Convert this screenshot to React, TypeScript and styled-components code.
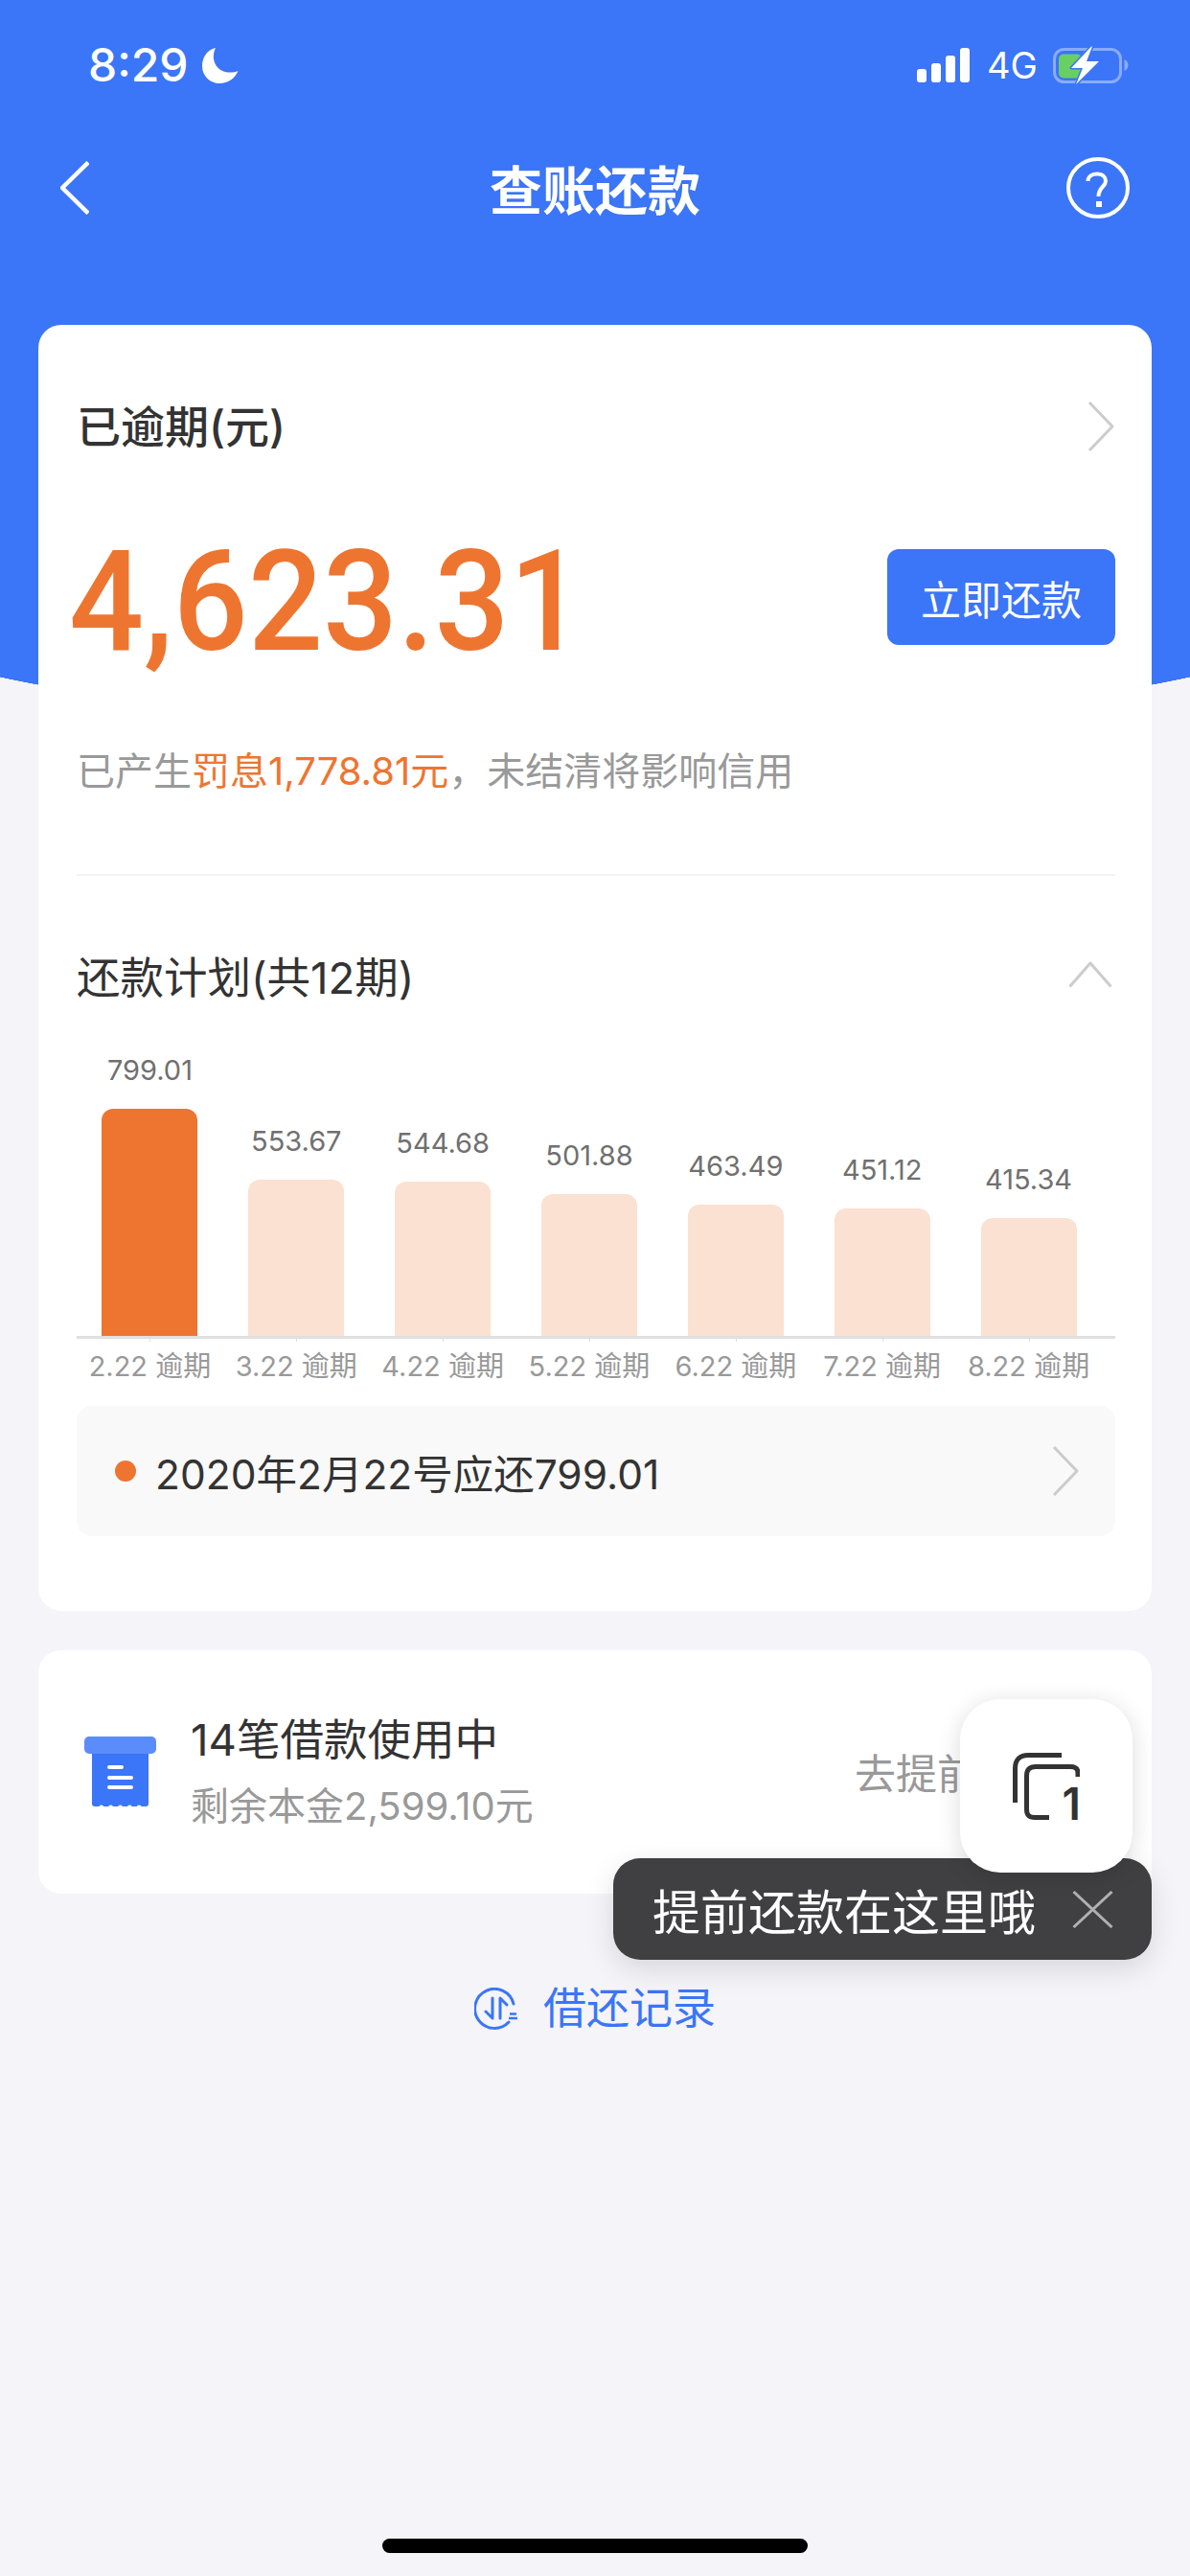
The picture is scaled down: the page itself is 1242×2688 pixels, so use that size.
import React from "react";
import styled, { createGlobalStyle } from "styled-components";

const BLUE = "#3b75f8";
const ORANGE = "#ee7530";

const bars = [
  { value: "799.01", label: "2.22", height: 237, active: true },
  { value: "553.67", label: "3.22", height: 163 },
  { value: "544.68", label: "4.22", height: 161 },
  { value: "501.88", label: "5.22", height: 148 },
  { value: "463.49", label: "6.22", height: 137 },
  { value: "451.12", label: "7.22", height: 133 },
  { value: "415.34", label: "8.22", height: 123 },
];

const GlobalStyle = createGlobalStyle`
  html, body {
    margin: 0;
    padding: 0;
    background: #f4f4f9;
  }
  * {
    box-sizing: border-box;
  }
  body {
    font-family: "Inter", "Noto Sans CJK SC", sans-serif;
    color: #333;
  }
`;

const Page = styled.div`
  position: relative;
  width: 1242px;
  height: 2688px;
  overflow: hidden;
  background: #f4f4f9;
`;

const Hero = styled.header`
  height: 760px;
  background:
    radial-gradient(ellipse 821px 154px at 621px 606px, ${BLUE} 99.8%, transparent 100%),
    linear-gradient(${BLUE}, ${BLUE}) 0 0 / 100% 606px no-repeat;
  color: #fff;
`;

const StatusBar = styled.div`
  height: 136px;
  display: flex;
  align-items: flex-start;
  justify-content: space-between;
  padding: 40px 64px 0 92px;
`;

const StatusLeft = styled.div`
  display: flex;
  align-items: center;
  gap: 14px;
  height: 56px;
`;

const Clock = styled.span`
  font-size: 48px;
  font-weight: 500;
  line-height: 56px;
`;

const StatusRight = styled.div`
  display: flex;
  align-items: center;
  height: 56px;
`;

const Network = styled.span`
  width: 51px;
  font-size: 38px;
  font-weight: 400;
  line-height: 56px;
  margin: 0 18px;
  white-space: nowrap;
`;

const NavBar = styled.nav`
  height: 120px;
  display: grid;
  grid-template-columns: 66px 1fr 66px;
  align-items: center;
  padding: 0 63px;
`;

const NavTitle = styled.h1`
  margin: 6px 0 0;
  font-size: 55px;
  font-weight: 700;
  line-height: 72px;
  text-align: center;
`;

const Content = styled.main`
  margin-top: -421px;
  padding: 0 40px;
  display: flex;
  flex-direction: column;
  gap: 41px;
  position: relative;
`;

const Card = styled.section`
  background: #fff;
  border-radius: 24px;
`;

const BillCard = styled(Card)`
  height: 1342px;
  padding: 0 38px 0 40px;
`;

const BillHeader = styled.div`
  height: 212px;
  display: flex;
  align-items: center;
  justify-content: space-between;
`;

const BillTitle = styled.h2`
  margin: 0 0 6px;
  font-size: 46px;
  font-weight: 500;
  color: #333;
`;

const AmountRow = styled.div`
  height: 134px;
  margin-top: 5px;
  display: flex;
  align-items: center;
  justify-content: space-between;
`;

const Amount = styled.div`
  font-family: "Roboto", sans-serif;
  font-size: 147px;
  font-weight: 500;
  line-height: 134px;
  padding-top: 9px;
  color: ${ORANGE};
  margin-left: -8px;
  transform: scaleX(0.935);
  transform-origin: left center;
`;

const PayButton = styled.button`
  width: 238px;
  height: 100px;
  border: 0;
  border-radius: 12px;
  background: ${BLUE};
  color: #fff;
  font-family: inherit;
  font-size: 42px;
  padding: 0;
`;

const Penalty = styled.p`
  margin: 87px 0 0;
  font-size: 40px;
  line-height: 56px;
  color: #999;
`;

const Highlight = styled.span`
  color: ${ORANGE};
`;

const Divider = styled.div`
  height: 2px;
  background: #f3f3f3;
  margin-top: 79px;
`;

const PlanHeader = styled.div`
  height: 60px;
  margin-top: 73px;
  display: flex;
  align-items: center;
  justify-content: space-between;
`;

const PlanTitle = styled.h3`
  margin: 0;
  font-size: 45.5px;
  font-weight: 400;
  color: #333;
`;

const UpChevron = styled.svg`
  margin-right: 3px;
`;

const Chart = styled.div`
  margin-top: 40px;
  height: 310px;
  padding-right: 14px;
  display: grid;
  grid-template-columns: repeat(7, 1fr);
  align-items: end;
  border-bottom: 3px solid #e0e0e0;
`;

const BarColumn = styled.div`
  display: flex;
  flex-direction: column;
  align-items: center;
  position: relative;

  &::after {
    content: "";
    position: absolute;
    left: 50%;
    bottom: -6px;
    width: 1px;
    height: 3px;
    background: #ddd;
  }
`;

const BarValue = styled.span`
  font-size: 29px;
  line-height: 36px;
  color: #707070;
  margin-bottom: 22px;
`;

const Bar = styled.div<{ $active?: boolean }>`
  width: 100px;
  border-radius: 12px 12px 0 0;
  background: ${(p) => (p.$active ? ORANGE : "#fbe1d1")};
`;

const Labels = styled.div`
  padding-right: 14px;
  display: grid;
  grid-template-columns: repeat(7, 1fr);
  margin-top: 9px;
`;

const Label = styled.span`
  text-align: center;
  white-space: nowrap;
  font-size: 29px;
  line-height: 40px;
  color: #999;
`;

const DueRow = styled.div`
  margin-top: 21px;
  height: 136px;
  border-radius: 16px;
  background: #f9f9f9;
  display: flex;
  align-items: center;
  padding: 0 37px 0 40px;
`;

const Dot = styled.span`
  width: 22px;
  height: 22px;
  border-radius: 50%;
  background: ${ORANGE};
  margin-right: 20px;
`;

const DueText = styled.span`
  flex: 1;
  font-size: 42.5px;
  color: #333;
`;

const LoanCard = styled(Card)`
  height: 254px;
  display: flex;
  align-items: center;
  padding: 0 0 0 48px;
`;

const LoanText = styled.div`
  margin: 0 0 3px 36px;
  display: flex;
  flex-direction: column;
  gap: 11px;
  flex: 1;
`;

const LoanTitle = styled.div`
  font-size: 45.5px;
  line-height: 64px;
  color: #333;
`;

const LoanSub = styled.div`
  font-size: 40px;
  line-height: 52px;
  color: #999;
`;

const LoanAction = styled.div`
  font-size: 43px;
  color: #999;
  margin: 0 95px 2px 0;
  white-space: nowrap;
`;

const RecordLink = styled.div`
  margin-top: 49px;
  display: flex;
  align-items: center;
  justify-content: center;
  gap: 26px;
  font-size: 45px;
  line-height: 60px;
  color: ${BLUE};
`;

const Tip = styled.div`
  position: absolute;
  left: 640px;
  top: 1939px;
  width: 562px;
  height: 106px;
  border-radius: 28px;
  background: #404042;
  box-shadow: 0 10px 30px rgba(0, 0, 0, 0.12);
  color: #fff;
  font-size: 50px;
  display: flex;
  align-items: center;
  justify-content: space-between;
  padding: 0 40px 0 41px;
`;

const FloatWindow = styled.div`
  position: absolute;
  left: 1002px;
  top: 1773px;
  width: 180px;
  height: 181px;
  border-radius: 42px;
  background: #fff;
  box-shadow: 0 4px 24px rgba(0, 0, 0, 0.14);
  display: flex;
  align-items: center;
  justify-content: center;
`;

const FloatIcon = styled.div`
  position: relative;
  width: 70px;
  height: 70px;
`;

const FloatCount = styled.span`
  position: absolute;
  right: -1px;
  bottom: -6px;
  font-size: 46px;
  font-weight: 600;
  line-height: 46px;
  color: #333;
`;

const HomeIndicator = styled.div`
  position: absolute;
  left: 399px;
  top: 2649px;
  width: 444px;
  height: 15px;
  border-radius: 8px;
  background: #000;
`;

function Chevron({ dir, color = "#ccc" }: { dir: "left" | "right"; color?: string }) {
  return (
    <svg width="30" height="56" viewBox="0 0 30 56" fill="none">
      <path
        d={dir === "left" ? "M29 1.5L2 28L29 54.5" : "M3 3L27 28L3 53"}
        stroke={color}
        strokeWidth={dir === "left" ? 4.5 : 3}
        strokeLinejoin="round"
      />
    </svg>
  );
}

function Moon() {
  return (
    <svg width="38" height="37" viewBox="0 0 38 37">
      <path d="M14 0C5 2 0 10 0 19C0 29 8 37 18 37C27 37 34 32 37.5 24C30 27 20 26 15 19C11 13 11 6 14 0Z" fill="#fff" />
    </svg>
  );
}

function Signal() {
  return (
    <svg width="55" height="36" viewBox="0 0 55 36" fill="#fff">
      <rect x="0" y="22" width="10" height="14" rx="3" />
      <rect x="15" y="16" width="10" height="20" rx="3" />
      <rect x="30" y="8" width="10" height="28" rx="3" />
      <rect x="45" y="0" width="10" height="36" rx="3" />
    </svg>
  );
}

function Battery() {
  return (
    <svg width="79" height="40" viewBox="0 0 79 40" fill="none">
      <rect x="1.5" y="3.5" width="69" height="34" rx="10" stroke="#fff" strokeOpacity="0.4" strokeWidth="3" />
      <path d="M74.5 14C77 15 78.5 17.5 78.5 20C78.5 22.5 77 25 74.5 26Z" fill="#fff" fillOpacity="0.4" />
      <rect x="6" y="8.5" width="24" height="25" rx="5" fill="#69cf62" />
      <path d="M40 0.5L19 23H31L24 40L48 16H35L41 0.5Z" fill="#fff" stroke={BLUE} strokeWidth="3" paintOrder="stroke" strokeLinejoin="round" />
    </svg>
  );
}

function HelpIcon() {
  return (
    <svg width="66" height="64" viewBox="0 0 66 64" fill="none">
      <ellipse cx="33" cy="32" rx="31" ry="30" stroke="#fff" strokeWidth="4" />
      <path d="M22.5 25C22.5 20 27 17.5 32 17.5C38 17.5 41 21 41 25C41 31 33.5 31 33.5 41" stroke="#fff" strokeWidth="4" />
      <rect x="31" y="46" width="6" height="6" fill="#fff" />
    </svg>
  );
}

function ReceiptIcon() {
  return (
    <svg width="75" height="74" viewBox="0 0 75 74">
      <path d="M8 15H67V70C67 72 66 73 64 73H11C9 73 8 72 8 70Z" fill={BLUE} />
      {[17.8, 27.6, 37.5, 47.4, 57.2].map((x) => (
        <circle key={x} cx={x} cy="74" r="2.5" fill="#fff" />
      ))}
      <rect x="0" y="0" width="75" height="18" rx="5" fill="#5b8cfb" />
      <rect x="24" y="30" width="17" height="4" rx="2" fill="#fff" />
      <rect x="24" y="41" width="27" height="4" rx="2" fill="#fff" />
      <rect x="24" y="51" width="27" height="4" rx="2" fill="#fff" />
    </svg>
  );
}

function RecordIcon() {
  return (
    <svg width="46" height="44" viewBox="0 0 46 44" fill="none" stroke={BLUE}>
      <path d="M41 17A20.5 20.5 0 1 0 36 36" strokeWidth="3" strokeLinecap="round" />
      <path d="M19 11V32L12 25M27 32V11L34 18" strokeWidth="3" strokeLinecap="round" strokeLinejoin="round" />
      <path d="M37 27.5H44M36 32H45" strokeWidth="2.5" />
    </svg>
  );
}

function CloseIcon() {
  return (
    <svg width="43" height="39" viewBox="0 0 43 39" fill="none" stroke="#b0b0b0" strokeWidth="3">
      <path d="M1.5 1L41.5 38M41.5 1L1.5 38" />
    </svg>
  );
}

function WindowIcon() {
  return (
    <svg width="70" height="70" viewBox="0 0 70 70" fill="none" stroke="#333" strokeWidth="5">
      <path d="M2.5 52V16C2.5 7 8 2.5 16 2.5H51" />
      <path d="M68 25V21C68 16 65 14.5 60 14.5H24C17 14.5 14.5 18 14.5 24V59C14.5 65 17 67.5 23 67.5H38" />
    </svg>
  );
}

export default function App() {
  return (
    <Page>
      <GlobalStyle />
      <Hero>
        <StatusBar>
          <StatusLeft>
            <Clock>8:29</Clock>
            <Moon />
          </StatusLeft>
          <StatusRight>
            <Signal />
            <Network>4G</Network>
            <Battery />
          </StatusRight>
        </StatusBar>
        <NavBar>
          <Chevron dir="left" color="#fff" />
          <NavTitle>查账还款</NavTitle>
          <HelpIcon />
        </NavBar>
      </Hero>
      <Content>
        <BillCard>
          <BillHeader>
            <BillTitle>已逾期(元)</BillTitle>
            <Chevron dir="right" />
          </BillHeader>
          <AmountRow>
            <Amount>4,623.31</Amount>
            <PayButton>立即还款</PayButton>
          </AmountRow>
          <Penalty>
            已产生<Highlight>罚息1,778.81元</Highlight>，未结清将影响信用
          </Penalty>
          <Divider />
          <PlanHeader>
            <PlanTitle>还款计划(共12期)</PlanTitle>
            <UpChevron width="46" height="28" viewBox="0 0 46 28" fill="none">
              <path d="M1.5 26.5L23 2L44.5 26.5" stroke="#ccc" strokeWidth="3" strokeLinejoin="round" />
            </UpChevron>
          </PlanHeader>
          <Chart>
            {bars.map((b) => (
              <BarColumn key={b.label}>
                <BarValue>{b.value}</BarValue>
                <Bar $active={b.active} style={{ height: b.height }} />
              </BarColumn>
            ))}
          </Chart>
          <Labels>
            {bars.map((b) => (
              <Label key={b.label}>{b.label} 逾期</Label>
            ))}
          </Labels>
          <DueRow>
            <Dot />
            <DueText>2020年2月22号应还799.01</DueText>
            <Chevron dir="right" />
          </DueRow>
        </BillCard>
        <LoanCard>
          <ReceiptIcon />
          <LoanText>
            <LoanTitle>14笔借款使用中</LoanTitle>
            <LoanSub>剩余本金2,599.10元</LoanSub>
          </LoanText>
          <LoanAction>去提前还款</LoanAction>
        </LoanCard>
        <RecordLink>
          <RecordIcon />
          借还记录
        </RecordLink>
      </Content>
      <Tip>
        提前还款在这里哦
        <CloseIcon />
      </Tip>
      <FloatWindow>
        <FloatIcon>
          <WindowIcon />
          <FloatCount>1</FloatCount>
        </FloatIcon>
      </FloatWindow>
      <HomeIndicator />
    </Page>
  );
}
